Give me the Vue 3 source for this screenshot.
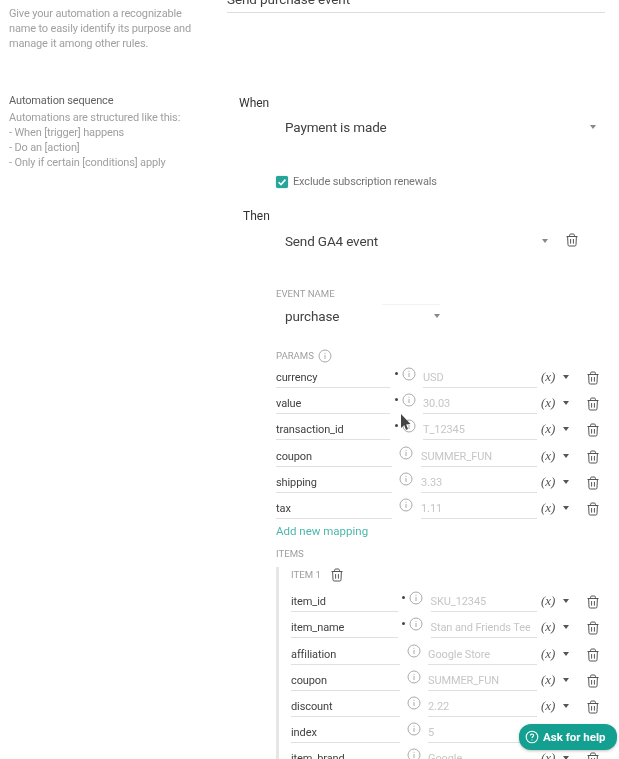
<script setup>
const params = [
  { key: 'currency', ph: 'USD', req: true },
  { key: 'value', ph: '30.03', req: true },
  { key: 'transaction_id', ph: 'T_12345', req: true },
  { key: 'coupon', ph: 'SUMMER_FUN' },
  { key: 'shipping', ph: '3.33' },
  { key: 'tax', ph: '1.11' }
]
const items = [
  { key: 'item_id', ph: 'SKU_12345', req: true },
  { key: 'item_name', ph: 'Stan and Friends Tee', req: true },
  { key: 'affiliation', ph: 'Google Store' },
  { key: 'coupon', ph: 'SUMMER_FUN' },
  { key: 'discount', ph: '2.22' },
  { key: 'index', ph: '5' },
  { key: 'item_brand', ph: 'Google' }
]
const trash = 'M1.5 3.5h11M4.6 3.5V2.2c0-.7.4-1.2 1.1-1.2h2.6c.7 0 1.1.5 1.1 1.2v1.3M2.6 3.5l.4 8.3c0 .8.5 1.2 1.2 1.2h5.6c.7 0 1.2-.4 1.2-1.2l.4-8.3M5.6 6v4.6M8.4 6v4.6'
</script>

<template>
  <div class="page">
    <div class="content">
      <section class="block name-block">
        <div class="side">
          <div class="side-title">Automation name</div>
          <p class="side-text">Give your automation a recognizable<br>name to easily identify its purpose and<br>manage it among other rules.</p>
        </div>
        <div class="main">
          <div class="name-input">Send purchase event</div>
        </div>
      </section>

      <section class="block seq-block">
        <div class="side">
          <div class="side-title">Automation sequence</div>
          <p class="side-text">Automations are structured like this:<br>- When [trigger] happens<br>- Do an [action]<br>- Only if certain [conditions] apply</p>
        </div>
        <div class="main">
          <div class="step-label when">When</div>
          <div class="select trigger">
            <span>Payment is made</span>
            <i class="caret"></i>
          </div>
          <label class="check">
            <span class="box">
              <svg viewBox="0 0 12 12" width="12" height="12"><path d="M2.6 6.2l2.4 2.4 4.4-5" fill="none" stroke="#fff" stroke-width="1.6"/></svg>
            </span>
            Exclude subscription renewals
          </label>
          <div class="step-label then">Then</div>
          <div class="action-row">
            <div class="select action">
              <span>Send GA4 event</span>
              <i class="caret"></i>
            </div>
            <svg class="trash" viewBox="0 0 14 14" width="14" height="14"><path :d="trash"/></svg>
          </div>

          <div class="fields">
            <div class="cap">EVENT NAME</div>
            <div class="select event">
              <span>purchase</span>
              <i class="caret"></i>
            </div>

            <div class="cap params-cap">
              PARAMS
              <svg class="info" viewBox="0 0 14 14" width="14" height="14"><circle cx="7" cy="7" r="6"/><path d="M7 6v4M7 3.8v1"/></svg>
            </div>
            <div v-for="p in params" :key="p.key" class="row" :class="{ req: p.req }">
              <div class="pair">
                <div class="key">{{ p.key }}</div>
                <div class="mark">
                  <span v-if="p.req" class="dot"></span>
                  <svg class="info" viewBox="0 0 14 14" width="14" height="14"><circle cx="7" cy="7" r="6"/><path d="M7 6v4M7 3.8v1"/></svg>
                </div>
                <div class="val"><span>{{ p.ph }}</span></div>
              </div>
              <span class="var">(x)</span>
              <i class="caret dark"></i>
              <svg class="trash" viewBox="0 0 14 14" width="14" height="14"><path :d="trash"/></svg>
            </div>
            <div class="add">Add new mapping</div>
            <div class="cap items-cap">ITEMS</div>

            <div class="item">
              <div class="item-head">
                <span class="cap">ITEM 1</span>
                <svg class="trash" viewBox="0 0 14 14" width="14" height="14"><path :d="trash"/></svg>
              </div>
              <div v-for="p in items" :key="p.key" class="row" :class="{ req: p.req }">
                <div class="pair">
                  <div class="key">{{ p.key }}</div>
                  <div class="mark">
                    <span v-if="p.req" class="dot"></span>
                    <svg class="info" viewBox="0 0 14 14" width="14" height="14"><circle cx="7" cy="7" r="6"/><path d="M7 6v4M7 3.8v1"/></svg>
                  </div>
                  <div class="val"><span>{{ p.ph }}</span></div>
                </div>
                <span class="var">(x)</span>
                <i class="caret dark"></i>
                <svg class="trash" viewBox="0 0 14 14" width="14" height="14"><path :d="trash"/></svg>
              </div>
            </div>
          </div>
        </div>
      </section>
    </div>

    <svg class="cursor" viewBox="0 0 12 18" width="12" height="18"><path d="M1 0l0 14 3.2-3 1.8 5 2-1-1.8-4.6 4.3-.4z" fill="#444"/></svg>

    <div class="help">
      <svg viewBox="0 0 14 14" width="14" height="14"><circle cx="7" cy="7" r="5.8" fill="none" stroke="#fff" stroke-width="1.1"/><path d="M5.4 5.6c0-2 3.2-2 3.2-.1 0 1.2-1.6 1.2-1.6 2.5M7 9.4v1" fill="none" stroke="#fff" stroke-width="1.1"/></svg>
      Ask for help
    </div>
  </div>
</template>

<style>
html, body { margin: 0; background: #fff; }
</style>

<style scoped>
.page { position: relative; width: 619px; height: 759px; overflow: hidden; background: #fff; font-family: Roboto, "Liberation Sans", sans-serif; color: #424242; filter: blur(0.35px); }
.content { margin-top: -13px; }
.block { display: grid; grid-template-columns: 227px 378px; }
.name-block { height: 106px; }
.side { padding-left: 9px; white-space: nowrap; }
.side-title { font-size: 11px; line-height: 15px; letter-spacing: -0.15px; color: #616161; }
.side-text { margin: 2px 0 0; font-size: 11px; line-height: 15px; letter-spacing: -0.15px; color: #a0a0a0; }
.name-block .side-text { margin-top: 4px; }
.name-input { font-size: 13.5px; line-height: 20px; letter-spacing: -0.1px; padding-top: 2px; height: 23px; border-bottom: 1px solid #ddd; }

.step-label { font-size: 12px; line-height: 16px; color: #333; }
.when { padding-left: 12px; padding-top: 2px; }
.then { padding-left: 16px; margin-top: 19px; }
.select { display: flex; align-items: center; justify-content: space-between; box-sizing: border-box; font-size: 13.5px; line-height: 20px; letter-spacing: -0.15px; padding-left: 58px; }
.trigger { margin-top: 6px; padding-right: 9px; }
.check { display: flex; align-items: center; gap: 5px; margin: 38px 0 0 49px; font-size: 11px; line-height: 14px; letter-spacing: -0.15px; color: #757575; }
.box { width: 12px; height: 12px; border-radius: 2px; background: #26a69a; box-shadow: 0 0 1px #26a69a; display: flex; }
.action-row { display: flex; align-items: center; margin-top: 7px; }
.action { width: 321px; }
.action-row .trash { margin-left: 17px; margin-top: -2px; }
.caret { display: block; width: 0; height: 0; border-left: 3.5px solid transparent; border-right: 3.5px solid transparent; border-top: 4px solid #888; }
.caret.dark { border-top-color: #555; }

.fields { width: 373px; box-sizing: border-box; padding-left: 49px; margin-top: 37px; }
.cap { font-size: 9.6px; line-height: 12px; color: #9e9e9e; }
.event { width: 164px; margin-top: 6px; padding-left: 9px; position: relative; }
.event::before { content: ""; position: absolute; left: 106px; top: -2px; width: 58px; height: 1px; background: #f2f2f2; }
.params-cap { display: flex; align-items: center; gap: 4px; margin-top: 23px; margin-bottom: 1px; }
.row { display: flex; align-items: flex-start; height: 26.2px; }
.pair { flex: 1; display: flex; }
.key, .val { flex: 1 1 0; min-width: 0; box-sizing: border-box; height: 24px; padding-top: 3px; font-size: 11px; line-height: 22px; letter-spacing: -0.1px; border-bottom: 1px solid #e0e0e0; }
.key { color: #424242; }
.val { color: #c6c6c6; white-space: nowrap; }
.val span { display: block; overflow: hidden; margin-right: 7px; }
.mark { width: 29px; flex: none; display: flex; justify-content: flex-end; align-items: flex-start; padding: 3px 8px 0 0; box-sizing: border-box; }
.req .mark { width: 33px; padding-right: 7px; }
.dot { width: 3px; height: 3px; border-radius: 50%; background: #444; margin: 5px 4px 0 0; }
.info { fill: none; stroke: #aaa; stroke-width: 1; flex: none; }
.var { width: 24px; flex: none; padding-left: 4px; box-sizing: border-box; font-family: "Liberation Serif", serif; font-style: italic; font-size: 13px; line-height: 25px; color: #555; }
.row .caret { flex: none; margin: 11px 1px 0 2px; }
.row .trash { margin: 7px 0 0 16px; flex: none; }
.trash { fill: none; stroke: #555; stroke-width: 1; flex: none; }
.add { margin-top: 2px; font-size: 11.5px; line-height: 16px; color: #4db6ac; }
.items-cap { margin-top: 9px; }
.item { margin-top: 7px; border-left: 3px solid #e6e6e6; padding-left: 12px; }
.item-head { display: flex; align-items: center; gap: 9px; height: 16px; margin-bottom: 5px; }
.item .mark { width: 28px; padding-right: 7px; }
.item .req .mark { width: 33px; padding-right: 8px; }

.cursor { position: absolute; left: 400px; top: 414px; }
.help { position: absolute; left: 519px; top: 724px; width: 98px; height: 26px; box-sizing: border-box; padding-left: 6px; border-radius: 12px; background: #14a091; color: #fff; display: flex; align-items: center; gap: 4px; font-size: 11.5px; font-weight: 700; box-shadow: 0 1px 3px rgba(0,0,0,.25); }
</style>
